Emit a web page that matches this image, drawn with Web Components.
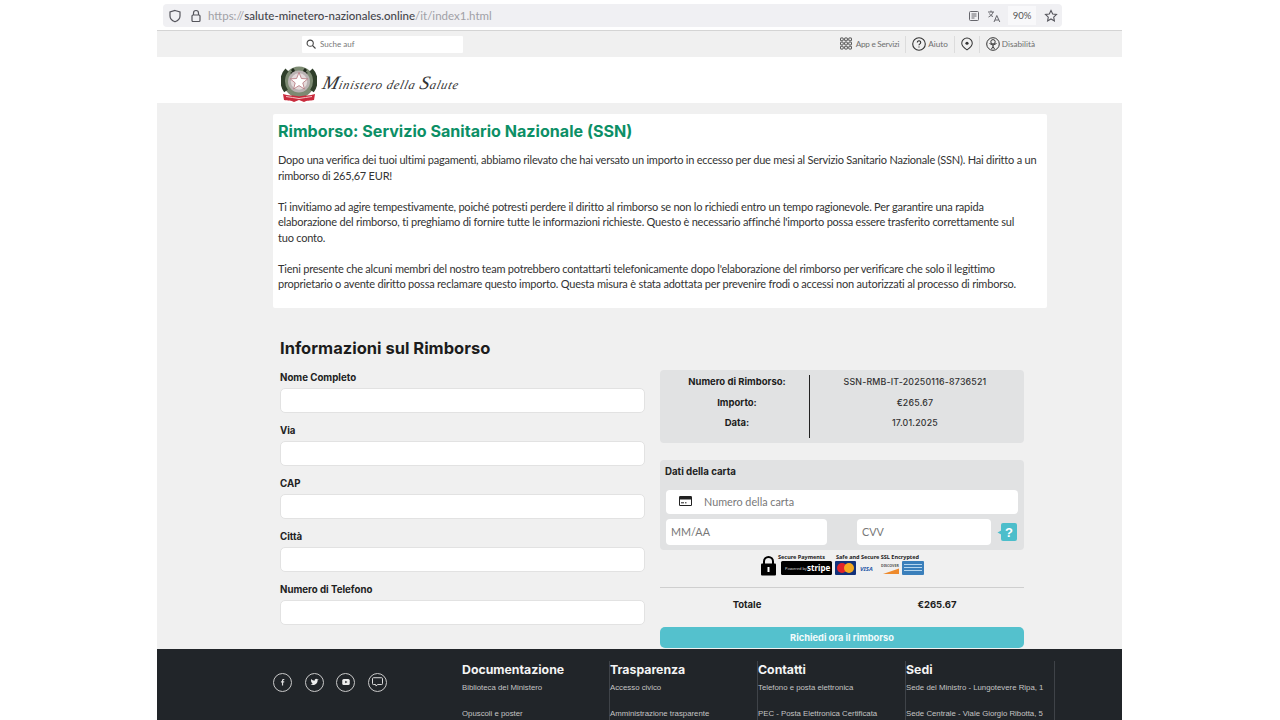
<!DOCTYPE html>
<html lang="it"><head><meta charset="utf-8"><title>Rimborso</title>
<style>
html,body{margin:0;height:720px;overflow:hidden;background:#fff}
body{font-family:Lato,"Noto Sans",sans-serif;color:#222}
#page{width:965px;margin-left:157px;display:block}
</style></head><body>
<div id="page">
<browser-bar></browser-bar>
<top-bar></top-bar>
<site-header></site-header>
<page-main>
  <info-card>
    <span slot="title">Rimborso: Servizio Sanitario Nazionale (SSN)</span>
    Dopo una verifica dei tuoi ultimi pagamenti, abbiamo rilevato che hai versato un importo in eccesso per due mesi al Servizio Sanitario Nazionale (SSN). Hai diritto a un rimborso di 265,67 EUR!<br><br>Ti invitiamo ad agire tempestivamente, poiché potresti perdere il diritto al rimborso se non lo richiedi entro un tempo ragionevole. Per garantire una rapida elaborazione del rimborso, ti preghiamo di fornire tutte le informazioni richieste. Questo è necessario affinché l'importo possa essere trasferito correttamente sul<br>tuo conto.<br><br>Tieni presente che alcuni membri del nostro team potrebbero contattarti telefonicamente dopo l'elaborazione del rimborso per verificare che solo il legittimo proprietario o avente diritto possa reclamare questo importo. Questa misura è stata adottata per prevenire frodi o accessi non autorizzati al processo di rimborso.
  </info-card>
  <refund-form>
    <form-field slot="fields" label="Nome Completo"></form-field>
    <form-field slot="fields" label="Via"></form-field>
    <form-field slot="fields" label="CAP"></form-field>
    <form-field slot="fields" label="Città"></form-field>
    <form-field slot="fields" label="Numero di Telefono"></form-field>
    <refund-summary slot="side"></refund-summary>
    <card-details slot="side"></card-details>
    <pay-badges slot="side"></pay-badges>
    <order-total slot="side"></order-total>
  </refund-form>
</page-main>
<site-footer>
  <footer-col title="Documentazione" a="Biblioteca del Ministero" b="Opuscoli e poster" first></footer-col>
  <footer-col title="Trasparenza" a="Accesso civico" b="Amministrazione trasparente"></footer-col>
  <footer-col title="Contatti" a="Telefono e posta elettronica" b="PEC - Posta Elettronica Certificata"></footer-col>
  <footer-col title="Sedi" a="Sede del Ministro - Lungotevere Ripa, 1" b="Sede Centrale - Viale Giorgio Ribotta, 5"></footer-col>
</site-footer>
</div>
<script>
const HEAD='Inter,"Liberation Sans",sans-serif';
const BODY='Lato,"Noto Sans",sans-serif';
function def(name,html){
  customElements.define(name,class extends HTMLElement{
    connectedCallback(){
      if(this.shadowRoot)return;
      const r=this.attachShadow({mode:'open'});
      r.innerHTML=typeof html==='function'?html(this):html;
    }
  });
}
def('browser-bar',`<style>
:host{display:flex;height:31px;box-sizing:border-box;border-bottom:1px solid #d4d4d4;padding:4px 60px 3px 6px;background:#fff}
.u{flex:1;display:flex;align-items:center;background:#f0f0f3;border-radius:4px;padding:0 4px 0 5px;font:11.500px ${BODY};color:#a0a0a6}
svg{display:block;flex:none}
b{font-weight:500;color:#45454b}
.t{margin-left:6px;white-space:nowrap;flex:1}
.z{font-size:9.500px;color:#555;background:#f8f8fa;width:28px;height:19px;line-height:19px;text-align:center;margin:0 8px 0 7px}
</style><div class="u">
<svg width="14" height="14" viewBox="0 0 14 14" fill="none" stroke="#55555c" stroke-width="1.200"><path d="M7 1.500 12 3v4c0 3-2.300 4.800-5 5.800C4.300 11.800 2 10 2 7V3z"/></svg>
<svg width="12" height="14" viewBox="0 0 12 14" style="margin-left:8px" fill="none" stroke="#55555c" stroke-width="1.200"><rect x="2" y="6" width="8" height="6.500" rx="1"/><path d="M3.500 6V4a2.500 2.500 0 0 1 5 0v2"/></svg>
<span class="t">https://<b>salute-minetero-nazionales.online</b>/it/index1.html</span>
<svg width="12" height="12" viewBox="0 0 12 12" fill="none" stroke="#66666c"><rect x="1.500" y="1.500" width="9" height="9" rx="1"/><path d="M3.500 4h5M3.500 6h5M3.500 8h3"/></svg>
<svg width="14" height="14" viewBox="0 0 14 14" style="margin-left:7px" fill="none" stroke="#66666c"><path d="M1 3h6M4 1.500V3M6 3C5.500 5.500 3.500 7 1.500 8M2.500 4.500C3.500 6.500 4.500 7 6 7.500M7 13l2.800-6.500L12.800 13M8 11h3.800"/></svg>
<span class="z">90%</span>
<svg width="14" height="14" viewBox="0 0 14 14" fill="none" stroke="#55555c" stroke-width="1.100"><path d="M7 1.500 8.700 5l3.800.5-2.800 2.600.7 3.800L7 10l-3.400 1.900.7-3.800L1.500 5.500 5.300 5z"/></svg>
</div>`);
def('top-bar',`<style>
:host{display:flex;align-items:center;height:26px;background:#f0f0f0;padding:0 87px 0 145px;font:8.200px ${BODY};color:#6f6f6f}
.s{width:161px;height:17px;background:#fff;display:flex;align-items:center;box-sizing:border-box;padding-left:4px;gap:4px;font-size:8px;color:#777;margin-right:auto;border-radius:1px}
.i{display:flex;align-items:center;gap:2px;white-space:nowrap;margin-top:-1px}
.i.g{gap:4px;letter-spacing:-.25px}
.sep{width:1px;height:17px;background:#dcdcdc;margin:0 6px}
svg{display:block;flex:none}
</style><div class="s"><svg width="10" height="10" viewBox="0 0 10 10" fill="none" stroke="#444" stroke-width="1.100"><circle cx="4.200" cy="4.200" r="3.100"/><path d="m6.500 6.500 3 3"/></svg>Suche auf</div>
<div class="i g"><svg width="12" height="13" viewBox="0 0 13 13" fill="none" stroke="#444" stroke-width="1"><rect x=".5" y=".5" width="3" height="3" rx=".5"/><rect x="5" y=".5" width="3" height="3" rx=".5"/><rect x="9.500" y=".5" width="3" height="3" rx=".5"/><rect x=".5" y="5" width="3" height="3" rx=".5"/><rect x="5" y="5" width="3" height="3" rx=".5"/><rect x="9.500" y="5" width="3" height="3" rx=".5"/><rect x=".5" y="9.500" width="3" height="3" rx=".5"/><rect x="5" y="9.500" width="3" height="3" rx=".5"/><rect x="9.500" y="9.500" width="3" height="3" rx=".5"/></svg>App e Servizi</div>
<span class="sep"></span>
<div class="i"><svg width="14" height="14" viewBox="0 0 14 14" fill="none" stroke="#333" stroke-width="1.100"><circle cx="7" cy="7" r="6.300"/><path d="M5.300 5.400a1.700 1.700 0 1 1 2.600 1.500c-.6.400-.9.700-.9 1.300M7 9.600v1"/></svg>Aiuto</div>
<span class="sep"></span>
<svg width="12" height="14" viewBox="0 0 13 14" fill="none" stroke="#333" stroke-width="1.100"><path d="M6.500 13.300C3.500 11.500 .8 9.300.8 6.200a5.700 5.700 0 0 1 11.400 0c0 3.100-2.700 5.300-5.700 7.100z"/><circle cx="6.500" cy="6.200" r="1.700" fill="#333" stroke="none"/></svg>
<span class="sep"></span>
<div class="i"><svg width="14" height="14" viewBox="0 0 14 14" fill="none" stroke="#333" stroke-width="1"><circle cx="7" cy="7" r="6.300"/><circle cx="7" cy="4.800" r="2.200"/><path d="M3.500 6.500 7 8l3.500-1.500M7 8v1.500L5.500 12M7 9.500 8.500 12"/></svg>Disabilità</div>`);
def('site-header',`<style>
:host{display:flex;align-items:center;height:46px;background:#fff;padding-left:124px;gap:6px}
svg{display:block;flex:none;margin-top:8px}
span{font:italic 12.500px "Liberation Serif",serif;color:#333;letter-spacing:.78px;display:inline-block;transform:skewX(-14deg);margin-top:5px;white-space:nowrap}
i{font-size:19px;font-style:italic}
</style>
<svg width="36" height="37" viewBox="0 0 36 37">
<circle cx="18" cy="16" r="15.500" fill="#7c8a72"/>
<path d="M6 4C1 9 0 18 5 25M30 4c5 5 6 14 1 21" stroke="#2f3f2a" stroke-width="4.500" fill="none"/>
<path d="M11 3c3 3 1 4-1 5M25 3c-3 3-1 4 1 5" stroke="#1f2a1c" stroke-width="3" fill="none"/>
<circle cx="18" cy="15.500" r="11" fill="#b9b2b2"/>
<circle cx="18" cy="15.500" r="8.200" fill="#e4dadb"/>
<path d="m18 6.500 2.400 6 6.300.4-4.900 4 1.600 6.100-5.400-3.400-5.400 3.400 1.600-6.100-4.900-4 6.300-.4z" fill="#fff" stroke="#b4747b" stroke-width=".8"/>
<path d="M2 28c5 2 10 1 16 2.500C24 29 29 30 34 28l-1 6c-4 1-7 0-10 2l-5-2-5 2c-3-2-6-1-10-2z" fill="#c92a3c"/>
<path d="M5 30.500c4 1 9 1 13 2 4-1 9-1 13-2" stroke="#f5d5d5" stroke-width=".9" fill="none"/>
</svg><span><i>M</i>inistero della <i>S</i>alute</span>`);
def('page-main',`<style>:host{display:block;background:#f0f0f0;height:546px;box-sizing:border-box;padding:11px 75px 0 116px}</style><slot></slot>`);
def('info-card',`<style>
:host{display:block;background:#fff;height:194px;box-sizing:border-box;padding:6px 5px 0 5px;font:11px/15.500px ${BODY};letter-spacing:-.215px;color:#333;border-radius:2px}
h1{margin:0 0 10px;font:700 16.100px/22px ${HEAD};color:#0c8f66;letter-spacing:0}
</style><h1><slot name="title"></slot></h1><slot></slot>`);
def('refund-form',`<style>
:host{display:block;padding:28px 23px 0 7px}
h2{margin:0;font:700 16.500px/24px ${HEAD};color:#1c1c1c;height:33px}
.g{display:grid;grid-template-columns:365px 364px;column-gap:15px;align-items:start}
.side{display:flex;flex-direction:column;margin-top:.5px}
.l{margin-top:2px}
</style><h2>Informazioni sul Rimborso</h2><div class="g"><div class="l"><slot name="fields"></slot></div><div class="side"><slot name="side"></slot></div></div>`);
def('form-field',h=>`<style>
:host{display:block;height:53.100px}
label{display:block;font:700 9.700px/12px ${HEAD};color:#222;padding-top:1px;height:16px;white-space:nowrap}
.i{height:23px;background:#fff;border:1px solid #e2e2e2;border-radius:5px}
</style><label>${h.getAttribute('label')}</label><div class="i"></div>`);
def('refund-summary',`<style>
:host{display:grid;grid-template-columns:150px 1fr;height:73px;box-sizing:border-box;background:#e1e2e3;border-radius:4px;padding:5px 0 5px;font:500 8.800px/20.500px ${HEAD};color:#333;text-align:center}
.a{font-weight:700;font-size:9.500px;color:#1c1c1c;border-right:1px solid #222;padding-left:5px}
.b{padding-right:4px;letter-spacing:.2px}
div div{display:block;margin-top:-2.500px}
</style><div class="a"><div>Numero di Rimborso:<br>Importo:<br>Data:</div></div><div class="b"><div>SSN-RMB-IT-20250116-8736521<br>€265.67<br>17.01.2025</div></div>`);
def('card-details',`<style>
:host{display:block;height:90.500px;margin-top:17px;box-sizing:border-box;background:#e1e2e3;border-radius:4px;padding:6px 6px 0 6px}
h3{margin:0 0 12.500px -1px;font:700 9.700px/12px ${HEAD};color:#222}
.f{background:#fff;border-radius:4px;display:flex;align-items:center;font:10.800px ${BODY};color:#777;box-sizing:border-box;padding:0 0 1px 5px}
.n{height:23.500px;gap:12px;padding-left:13px}
.r{display:flex;align-items:center;margin-top:5.500px}
.m{width:161px;height:26px}
.c{width:134px;height:26px;margin-left:30px}
svg{display:block;flex:none}
</style><h3>Dati della carta</h3>
<div class="f n"><svg width="13" height="10" viewBox="0 0 13 10"><rect width="13" height="10" rx="1.200" fill="#222"/><rect x="1" y="3.500" width="11" height="5.500" fill="#fff"/><path d="M2 6.800h3M6 6.800h1.500" stroke="#222"/></svg>Numero della carta</div>
<div class="r"><div class="f m">MM/AA</div><div class="f c">CVV</div>
<svg width="21" height="19" viewBox="0 0 21 19" style="margin-left:6px"><path d="M6 6.500 .5 9.500 6 12.500z" fill="#4cbecb"/><rect x="4" y="0" width="16" height="18" rx="2" fill="#4cbecb"/><text x="12" y="14" text-anchor="middle" font-family="Liberation Sans" font-weight="700" font-size="13" fill="#fff">?</text></svg></div>`);
def('pay-badges',`<style>
:host{display:flex;justify-content:center;height:26px;padding-top:2.500px;padding-right:1px;box-sizing:content-box}
svg{display:block}
text{font-family:"Noto Sans",sans-serif}
</style><svg width="164" height="24" viewBox="0 -2 164 24">
<text x="18" y="3.800" font-size="5.500" font-weight="700" fill="#222">Secure Payments</text>
<text x="76" y="3.800" font-size="5.500" font-weight="700" fill="#222">Safe and Secure SSL Encrypted</text>
<path d="M4 9V6.500a4.500 4.500 0 0 1 9 0V9" fill="none" stroke="#000" stroke-width="2"/><rect x="1" y="8.500" width="15" height="12" rx="1" fill="#000"/><rect x="7.500" y="12" width="2" height="5" fill="#fff"/>
<rect x="21" y="6" width="51" height="14" rx="1.500" fill="#000"/>
<text x="25" y="15" font-size="4" fill="#ddd">Powered by</text><text x="47" y="16" font-size="8" font-weight="700" fill="#fff">stripe</text>
<rect x="75" y="6" width="21" height="14" rx="1" fill="#12317a"/><circle cx="82" cy="13" r="5" fill="#e2232a"/><circle cx="89" cy="13" r="5" fill="#f4a91f"/>
<text x="100" y="15.500" font-size="6" font-weight="700" font-style="italic" fill="#2a5aa8">VISA</text>
<text x="121" y="11.500" font-size="3.600" font-weight="700" fill="#555">DISCOVER</text><path d="M123 19 139 13.500V19z" fill="#ee8a2c"/>
<rect x="142" y="6" width="22" height="14" rx="1" fill="#3a7fbb"/><path d="M144 9.500h18M144 12.500h18M144 15.500h18" stroke="#b5d6ee" stroke-width="1"/>
</svg>`);
def('order-total',`<style>
:host{display:block;border-top:1px solid #cfcfcf;margin-top:8px}
.t{display:flex;font:700 9.500px/14px ${HEAD};color:#1c1c1c;padding-top:10px;height:29px;text-align:center}
.t span{flex:none}
.t span:first-child{width:174px}.t span:last-child{width:154px;margin-left:26px}
button{display:block;width:100%;height:21.500px;border:0;border-radius:5px;background:#54c1cd;color:#f2fbfc;font:700 9.300px ${HEAD};padding:0}
</style><div class="t"><span>Totale</span><span>€265.67</span></div><button>Richiedi ora il rimborso</button>`);
def('site-footer',`<style>
:host{display:flex;height:71px;background:#212529;overflow:hidden;padding-left:116px;box-sizing:border-box}
.s{width:189px;display:flex;gap:12.700px;padding-top:23.500px;align-items:flex-start}
.s a{display:flex;flex:none;width:19px;height:19px;box-sizing:border-box;border:1px solid #c8c8c8;border-radius:50%;align-items:center;justify-content:center}
.c{display:flex}
svg{display:block}
</style><div class="s">
<a><svg width="7" height="8" viewBox="0 0 9 9"><path d="M5.300 9V5h1.300l.2-1.500H5.300v-1c0-.4.200-.7.700-.7h.8V.5H5.700C4.500.5 3.800 1.200 3.800 2.400v1.100H2.500V5h1.300v4z" fill="#ddd"/></svg></a>
<a><svg width="9" height="8" viewBox="0 0 10 9"><path d="M9.500 1.800c-.3.200-.7.300-1 .3.400-.2.700-.6.800-1-.4.200-.8.400-1.100.4A1.800 1.800 0 0 0 5.100 3C3.600 2.900 2.200 2.200 1.300 1c-.5.800-.2 1.900.5 2.400-.3 0-.5-.1-.8-.2 0 .9.600 1.600 1.400 1.800-.2.100-.5.100-.8 0 .2.700.9 1.200 1.700 1.300-.8.600-1.700.9-2.800.8 2.800 1.700 8.100.8 8.100-5.100.4-.3.700-.6.900-1z" fill="#eee"/></svg></a>
<a><svg width="8" height="6" viewBox="0 0 10 8"><rect width="10" height="8" rx="2" fill="#eee"/><path d="M4 2.200v3.600L7 4z" fill="#212529"/></svg></a>
<a><svg width="11" height="10" viewBox="0 0 12 11" fill="none" stroke="#ddd" stroke-width="1.100"><path d="M1.500.8h9a1 1 0 0 1 1 1v5.500a1 1 0 0 1-1 1H6L4.500 10 4 8.300H1.500a1 1 0 0 1-1-1V1.800a1 1 0 0 1 1-1z"/></svg></a>
</div><div class="c"><slot></slot></div>`);
def('footer-col',h=>`<style>
:host{display:block;width:148px;box-sizing:border-box;margin-top:12px;height:59px}
h4{margin:0;font:700 12.300px/18px ${HEAD};color:#f4f4f4}
p{margin:0;font:7.800px/11px "Liberation Sans",sans-serif;color:#c4c4c4;white-space:nowrap;padding-top:2.500px}
p+p{padding-top:15px}
:host(:not([first])){border-left:1px solid #3f4348;margin-left:-1px;width:149px}
:host(:last-child){width:150px;border-right:1px solid #3f4348}
</style><h4>${h.getAttribute('title')}</h4><p>${h.getAttribute('a')}</p><p>${h.getAttribute('b')}</p>`);
</script>
</body></html>
